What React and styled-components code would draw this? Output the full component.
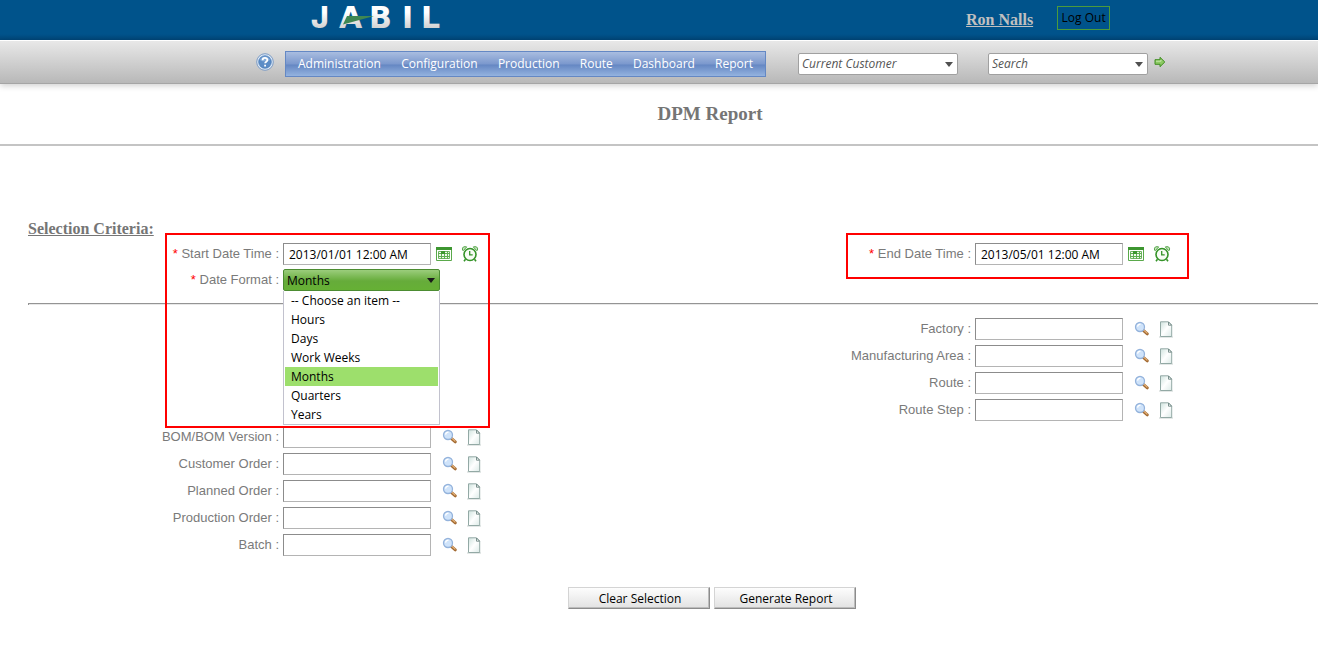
import React from "react";
import styled, { createGlobalStyle, css } from "styled-components";

const ui = `"Open Sans", "Noto Sans", sans-serif`;
const arial = `"Liberation Sans", Arial, sans-serif`;
const serif = `"Liberation Serif", "Times New Roman", serif`;

const GlobalStyle = createGlobalStyle`
  *, *::before, *::after { box-sizing: border-box; }
  body { margin: 0; background: #fff; font-family: ${ui}; font-size: 12px; color: #000; }
  svg { display: block; }
`;

const TopBar = styled.header`
  display: flex;
  height: 40px;
  padding-left: 310px;
  background: linear-gradient(#00538b 0, #00538b 34px, #004576 40px);
`;

const Logo = styled.svg`
  flex: none;
  width: 136px;
  height: 40px;
  overflow: visible;
`;

const UserName = styled.a`
  margin: 11px 24px 0 520px;
  font: bold 16px/18px ${serif};
  color: #c0c0c0;
  white-space: nowrap;
`;

const LogOut = styled.button`
  margin-top: 6px;
  width: 53px;
  height: 24px;
  padding: 0;
  border: 1px solid #4c9a3c;
  background: transparent;
  font: 12px/20px ${ui};
  color: #000;
  white-space: nowrap;
`;

const Toolbar = styled.div`
  display: flex;
  align-items: center;
  height: 44px;
  padding-left: 256px;
  border-top: 1px solid #fff;
  border-bottom: 1px solid #a5a5a5;
  background: linear-gradient(#e8e8e8, #b8b8b8);
  box-shadow: 0 2px 6px rgba(0, 0, 0, 0.18);
`;

const IconButton = styled.button`
  flex: none;
  padding: 0;
  border: 0;
  background: none;
`;

const Menu = styled.nav`
  display: flex;
  align-items: center;
  justify-content: space-between;
  flex: none;
  width: 481px;
  height: 26px;
  margin: 3px 32px 0 11px;
  padding: 0 12px;
  border: 1px solid #6488c4;
  background: linear-gradient(#a9bde0 0, #7b98cd 50%, #6587c3 54%, #94b3df 100%);
`;

const MenuLink = styled.a`
  color: #fff;
  line-height: 24px;
  text-decoration: none;
`;

const caret = (color) => css`
  &::after {
    content: "";
    position: absolute;
    right: 5px;
    top: 9px;
    border: 4px solid transparent;
    border-top: 5px solid ${color};
    border-bottom: 0;
    pointer-events: none;
  }
`;

const ComboWrap = styled.div`
  position: relative;
  flex: none;
  width: 160px;
  margin: 3px 30px 0 0;
  ${caret("#505050")}
`;

const Combo = styled.select`
  appearance: none;
  display: block;
  width: 100%;
  height: 22px;
  padding: 0 20px 0 3px;
  border: 1px solid #a0a0a0;
  border-radius: 2px;
  background: #fff;
  font: italic 12px/20px ${ui};
  color: #555;
`;

const SearchGroup = styled.div`
  display: flex;
  align-items: center;
  gap: 6px;

  ${ComboWrap} { margin-right: 0; }
`;

const Title = styled.h1`
  margin: 0;
  padding: 20px 0 20px 102px;
  border-bottom: 2px solid #c4c4c4;
  font: bold 19px/20px ${serif};
  color: #757575;
  text-align: center;
`;

const Main = styled.main`
  padding: 74px 0 36px 28px;
`;

const SectionTitle = styled.h2`
  margin: 0;
  font: bold 16px/18px ${serif};
  color: #757575;
  text-decoration: underline;
`;

const Columns = styled.div`
  display: grid;
  grid-template-columns: 692fr 598fr;
`;

const Column = styled.div`
  display: flex;
  flex-direction: column;
  align-items: flex-start;
  gap: ${(p) => p.$gap || 5}px;
  padding-top: ${(p) => p.$top || 0}px;
`;

const DateColumn = styled(Column)`
  position: relative;
  height: 63px;
`;

const Highlight = styled.div`
  position: absolute;
  z-index: 3;
  top: -5px;
  left: ${(p) => p.$left}px;
  width: ${(p) => p.$width}px;
  height: ${(p) => p.$height}px;
  border: 2px solid #f00;
  pointer-events: none;
`;

const Row = styled.div`
  display: flex;
  align-items: center;
  height: 22px;
`;

const Label = styled.label`
  width: 251px;
  margin-right: 4px;
  font: 13px/24px ${arial};
  color: #7a7a7a;
  text-align: right;
  white-space: nowrap;
`;

const Star = styled.span`
  color: #f00;
`;

const TextBox = styled.input`
  width: 148px;
  height: 22px;
  margin-right: ${(p) => (p.$date ? 5 : 11)}px;
  padding: 0 5px;
  border: 1px solid #8c8c8c;
  border-right-color: #b4b4b4;
  border-bottom-color: #b4b4b4;
  background: #fff;
  font: 12px/20px ${ui};
  color: #000;
`;

const Icons = styled.div`
  display: flex;
  align-items: center;
  gap: ${(p) => (p.$date ? 9 : 8)}px;
`;

const FormatPicker = styled.div`
  position: relative;
  width: 157px;
  ${caret("#1a1a1a")}
`;

const FormatSelect = styled.select`
  appearance: none;
  display: block;
  width: 100%;
  height: 22px;
  padding: 1px 20px 0 3px;
  border: 1px solid #4c8c32;
  border-radius: 2px;
  background: linear-gradient(#9bcd7c, #66ac3a 55%, #66b035);
  font: 12px/20px ${ui};
  color: #000;
`;

const OptionList = styled.ul`
  position: absolute;
  z-index: 2;
  top: 22px;
  left: 0;
  width: 100%;
  margin: 0;
  padding: 0 1px;
  border: 1px solid #c2c2ce;
  border-top: 0;
  background: #fff;
  list-style: none;
`;

const Option = styled.li`
  padding-left: 6px;
  line-height: 19px;
  background: ${(p) => (p["aria-selected"] ? "#9ddf6c" : "transparent")};
`;

const Divider = styled.hr`
  height: 2px;
  margin: 2px 0 13px;
  border: 0;
  border-top: 1px solid #949494;
  border-left: 1px solid #949494;
  background: #e8e8e8;
`;

const Actions = styled.div`
  display: flex;
  justify-content: center;
  gap: 4px;
  padding: 31px 0 0 78px;
`;

const ActionButton = styled.button`
  width: 142px;
  height: 22px;
  padding: 1px 0 0 2px;
  border: 1px solid #d4d4d4;
  border-right-color: #8c8c8c;
  border-bottom-color: #8c8c8c;
  background: linear-gradient(#fdfdfd, #e2e2e2);
  box-shadow: inset -1px -1px #bcbcbc;
  font: 12px/18px ${ui};
  color: #000;
`;

const HelpIcon = () => (
  <svg width="18" height="18" viewBox="0 0 18 18">
    <circle cx="9" cy="9" r="8.3" fill="#dce9f7" stroke="#7e9cc4" strokeWidth="1" />
    <circle cx="9" cy="9" r="6.3" fill="#5b8cc6" stroke="#4a7ab4" strokeWidth=".7" />
    <path d="M4 7a5.3 5.3 0 0 1 10 0q-5 3-10 0" fill="#9fc0e6" opacity=".6" />
    <path d="M6.6 7.2c0-3 4.800-3 4.800-.2 0 1.700-2.300 1.600-2.300 3.300M9.100 11.800v1.700" fill="none" stroke="#fff" strokeWidth="1.800" />
  </svg>
);

const GoIcon = () => (
  <svg width="12" height="12" viewBox="0 0 12 12">
    <path d="M1 3.700h5V1.300L10.800 6 6 10.700V8.300H1z" fill="#8cc963" stroke="#3f8d20" strokeWidth="1" />
    <path d="M2 5.200h5V4" fill="none" stroke="#d3efbd" strokeWidth=".8" />
  </svg>
);

const CalendarIcon = () => (
  <svg width="16" height="16" viewBox="0 0 16 16">
    <path d="M.5 3.500v11h15v-11" fill="#fff" stroke="#5aa94b" />
    <path d="M0 1h16v3H0z" fill="#3d9630" />
    <path d="M2.500 5.500h11v7h-11z" fill="#eef8eb" stroke="#6fb562" />
    <path d="M5.500 5v8M8.500 5v8M11.500 5v8M2 7.500h12M2 10.500h12" stroke="#5fae50" />
    <path d="M5 5h4v3H5z" fill="#3d9630" />
  </svg>
);

const ClockIcon = () => (
  <svg width="18" height="18" viewBox="0 0 18 18" fill="none" stroke="#359328">
    <circle cx="9" cy="9.500" r="6" strokeWidth="1.600" fill="#f7fcf5" />
    <path d="M1.500 5.200V3.100Q2 1.500 4.300 1.600l1.400.3L2.400 5.600zM16.500 5.200V3.100Q16 1.500 13.700 1.600l-1.400.3 3.300 3.700z" fill="#c6e6bd" strokeWidth=".8" />
    <path d="M4.500 14.200 3 16.200M13.500 14.200l1.500 2" strokeWidth="1.600" />
    <path d="M8.700 6v3.800h3" strokeWidth="1.300" />
  </svg>
);

const MagnifierIcon = () => (
  <svg width="16" height="16" viewBox="0 0 16 16">
    <path d="m9.300 9.400 4 3.400" stroke="#a36a32" strokeWidth="3" strokeLinecap="round" />
    <path d="m10 9.400 3 2.600" stroke="#e3b27a" strokeWidth="1.200" strokeLinecap="round" />
    <circle cx="6" cy="6" r="4.500" fill="#cfe3fa" stroke="#94b3dc" strokeWidth="1.300" />
    <path d="M3.500 5.600q.5-2.400 3-2.400" fill="none" stroke="#fff" strokeWidth="1.300" />
  </svg>
);

const PageIcon = () => (
  <svg width="16" height="17" viewBox="0 0 16 17">
    <defs>
      <linearGradient id="page" x1="0" y1="0" x2="1" y2="1">
        <stop offset="0" stopColor="#cfe3de" />
        <stop offset=".5" stopColor="#fff" />
        <stop offset="1" stopColor="#dceae7" />
      </linearGradient>
    </defs>
    <path d="M1 16h14" stroke="#c9d1cf" />
    <path d="M2.500.8h8l3.200 3.200v11.500H2.500z" fill="url(#page)" stroke="#93a9a5" />
    <path d="M10.500 1v3.200h3z" fill="#fff" stroke="#6d8682" strokeWidth=".9" />
  </svg>
);

function DateField({ id, label, value }) {
  return (
    <Row>
      <Label htmlFor={id}><Star>*</Star> {label} :</Label>
      <TextBox id={id} defaultValue={value} $date />
      <Icons $date>
        <IconButton aria-label="Pick date"><CalendarIcon /></IconButton>
        <IconButton aria-label="Pick time"><ClockIcon /></IconButton>
      </Icons>
    </Row>
  );
}

function LookupField({ label }) {
  const id = label.toLowerCase().replace(/\W+/g, "-");
  return (
    <Row>
      <Label htmlFor={id}>{label} :</Label>
      <TextBox id={id} />
      <Icons>
        <IconButton aria-label={`Find ${label}`}><MagnifierIcon /></IconButton>
        <IconButton aria-label={`Clear ${label}`}><PageIcon /></IconButton>
      </Icons>
    </Row>
  );
}

const menu = ["Administration", "Configuration", "Production", "Route", "Dashboard", "Report"];
const formats = ["-- Choose an item --", "Hours", "Days", "Work Weeks", "Months", "Quarters", "Years"];
const orders = ["BOM/BOM Version", "Customer Order", "Planned Order", "Production Order", "Batch"];
const places = ["Factory", "Manufacturing Area", "Route", "Route Step"];

export default function App() {
  return (
    <>
      <GlobalStyle />
      <TopBar>
        <Logo viewBox="0 0 136 40" role="img" aria-label="Jabil">
          <defs>
            <linearGradient id="silver" gradientUnits="userSpaceOnUse" x1="0" y1="6" x2="0" y2="28">
              <stop offset=".3" stopColor="#fff" />
              <stop offset="1" stopColor="#d2d2d2" />
            </linearGradient>
          </defs>
          <g fill="url(#silver)" fontFamily="DejaVu Sans" fontWeight="700" fontSize="30">
            <text x="1" y="28" fontFamily="Inter" fontWeight="800">J</text>
            <text x="29" y="28">A</text>
            <text x="59" y="28">B</text>
            <text x="92" y="28">I</text>
            <text x="111" y="28">L</text>
          </g>
          <path d="M37 16 64 16 33 24.500z" fill="#3f8752" />
        </Logo>
        <UserName href="#user">Ron Nalls</UserName>
        <LogOut>Log Out</LogOut>
      </TopBar>
      <Toolbar>
        <IconButton aria-label="Help"><HelpIcon /></IconButton>
        <Menu>
          {menu.map((m) => <MenuLink key={m} href={`#${m}`}>{m}</MenuLink>)}
        </Menu>
        <ComboWrap>
          <Combo aria-label="Current Customer"><option>Current Customer</option></Combo>
        </ComboWrap>
        <SearchGroup>
          <ComboWrap>
            <Combo aria-label="Search"><option>Search</option></Combo>
          </ComboWrap>
          <IconButton aria-label="Go"><GoIcon /></IconButton>
        </SearchGroup>
      </Toolbar>
      <Title>DPM Report</Title>
      <Main>
        <SectionTitle>Selection Criteria:</SectionTitle>
        <Columns>
          <DateColumn $gap={4} $top={5}>
            <DateField id="start" label="Start Date Time" value="2013/01/01 12:00 AM" />
            <Row>
              <Label htmlFor="format"><Star>*</Star> Date Format :</Label>
              <FormatPicker>
                <FormatSelect id="format" defaultValue="Months">
                  {formats.map((f) => <option key={f}>{f}</option>)}
                </FormatSelect>
                <OptionList role="listbox" aria-label="Date Format">
                  {formats.map((f) => (
                    <Option key={f} role="option" aria-selected={f === "Months"}>{f}</Option>
                  ))}
                </OptionList>
              </FormatPicker>
            </Row>
            <Highlight $left={137} $width={325} $height={195} />
          </DateColumn>
          <DateColumn $top={5}>
            <DateField id="end" label="End Date Time" value="2013/05/01 12:00 AM" />
            <Highlight $left={126} $width={343} $height={46} />
          </DateColumn>
        </Columns>
        <Divider />
        <Columns>
          <Column $top={108}>{orders.map((l) => <LookupField key={l} label={l} />)}</Column>
          <Column>{places.map((l) => <LookupField key={l} label={l} />)}</Column>
        </Columns>
        <Actions>
          <ActionButton>Clear Selection</ActionButton>
          <ActionButton>Generate Report</ActionButton>
        </Actions>
      </Main>
    </>
  );
}
